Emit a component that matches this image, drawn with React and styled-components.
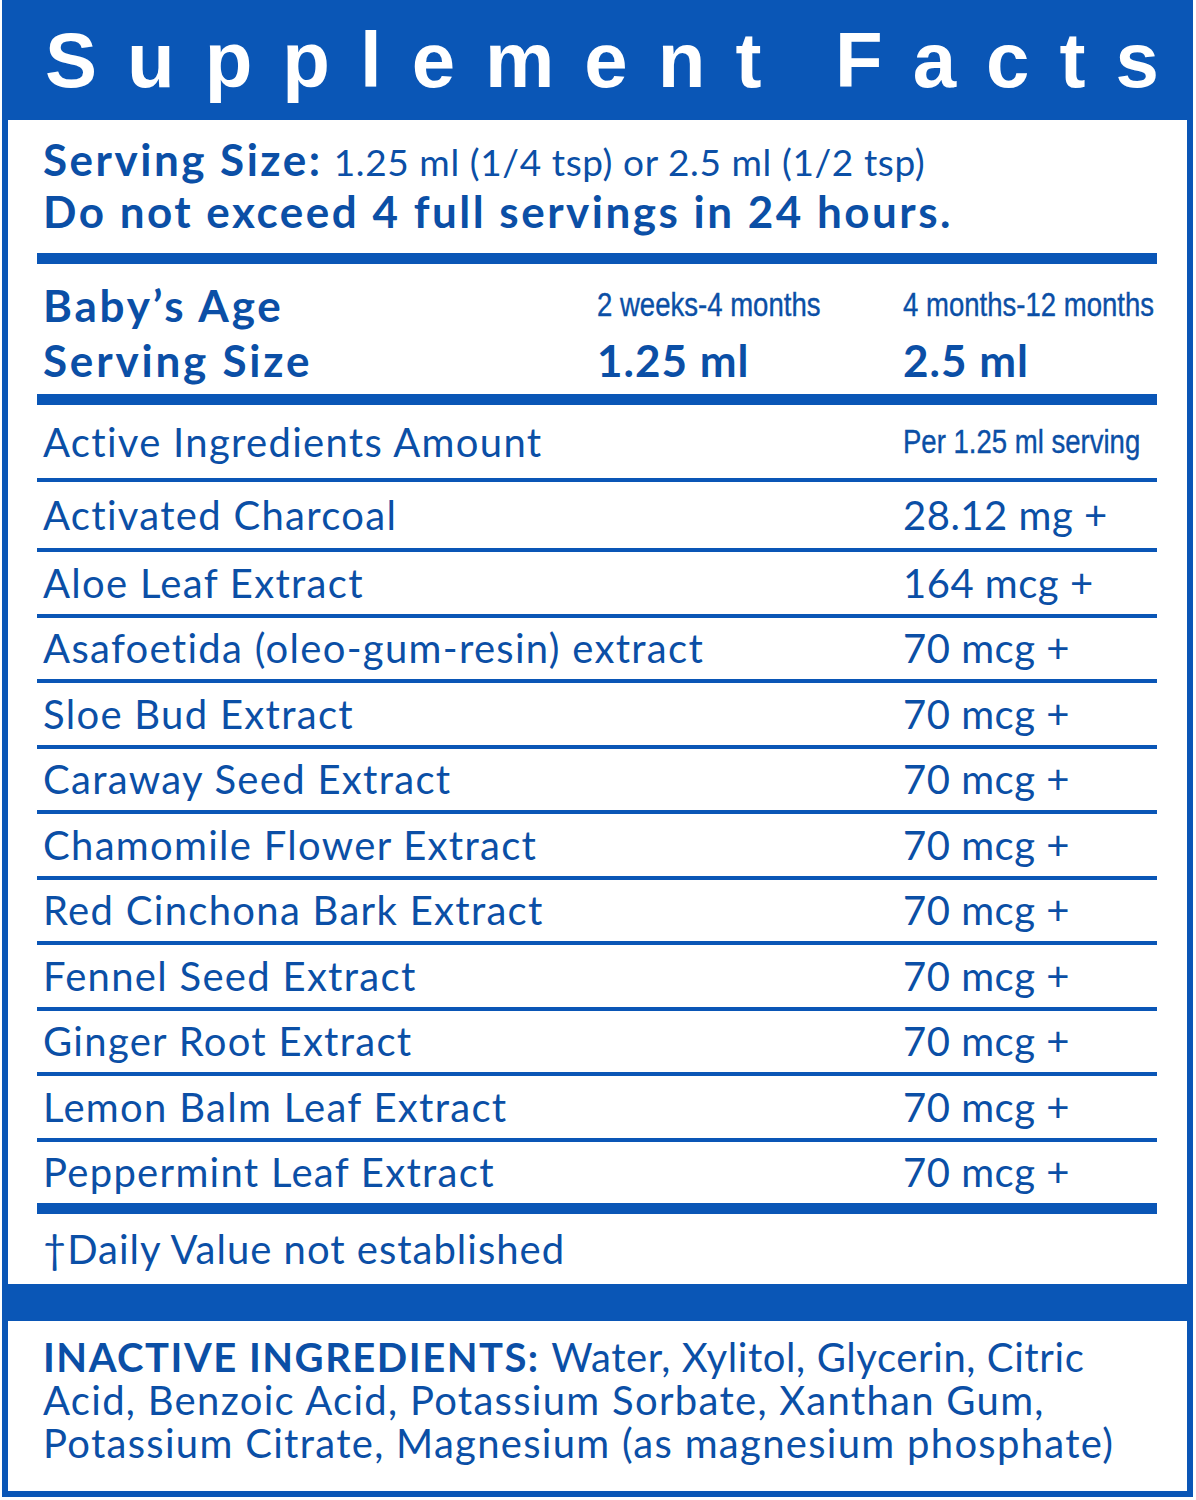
import React from "react";
import styled, { createGlobalStyle } from "styled-components";

const BLUE = "#0a56b6";
const INK = "#0b4fa6";

const GlobalStyle = createGlobalStyle`
  html, body {
    margin: 0;
    padding: 0;
    background: #ffffff;
  }
  body {
    font-family: Lato, "Noto Sans", sans-serif;
    color: ${INK};
  }
`;

const Frame = styled.div`
  width: 1196px;
  height: 1500px;
  box-sizing: border-box;
  padding: 0 3px 3px 2px;
  background: #ffffff;
  overflow: hidden;
`;

const Label = styled.div`
  height: 100%;
  box-sizing: border-box;
  border: 6px solid ${BLUE};
  border-top: none;
  display: flex;
  flex-direction: column;
`;

const Header = styled.div`
  height: 120px;
  flex: none;
  background: ${BLUE};
  display: flex;
  align-items: center;
  padding-left: 37px;
  box-sizing: border-box;
`;

const Title = styled.h1`
  margin: 0;
  color: #ffffff;
  font-family: "Liberation Sans", Arial, sans-serif;
  font-weight: 700;
  font-size: 78px;
  letter-spacing: 30px;
  word-spacing: -8px;
  line-height: 1;
  white-space: nowrap;
`;

const Body = styled.div`
  padding: 0 30px 0 29px;
`;

const ServingBlock = styled.div`
  padding: 13px 0 16px 6px;
`;

const ServingLine = styled.div`
  height: 52px;
  line-height: 52px;
  font-size: 44px;
  white-space: nowrap;
`;

const Strong = styled.span`
  font-weight: 700;
  font-size: 44px;
  letter-spacing: 2.5px;
`;

const Light = styled.span`
  font-weight: 400;
  font-size: 37px;
  letter-spacing: 0.6px;
`;

const Rule = styled.div`
  height: ${(p) => (p.thick ? 11 : 4)}px;
  background: ${BLUE};
`;

const AgeGrid = styled.div`
  display: grid;
  grid-template-columns: 554px 306px 1fr;
  grid-auto-rows: 55px;
  align-items: center;
  padding: 13px 0 7px 6px;
`;

const AgeHead = styled.div`
  font-size: 44px;
  font-weight: 700;
  letter-spacing: 2.8px;
  white-space: nowrap;
`;

const Narrow = styled.div`
  font-family: "Liberation Sans", Arial, sans-serif;
  font-size: 34px;
  white-space: nowrap;
  transform: scaleX(0.81);
  transform-origin: left center;
  -webkit-text-stroke: 0.4px ${INK};
`;

const AgeValue = styled.div`
  font-size: 44px;
  font-weight: 700;
  letter-spacing: 1px;
  white-space: nowrap;
`;

const Row = styled.div`
  display: grid;
  grid-template-columns: 860px 1fr;
  align-items: center;
  height: ${(p) => p.h || 61.5}px;
  padding-left: 6px;
  font-size: 40px;
  white-space: nowrap;
`;

const Name = styled.span`
  letter-spacing: 1.3px;
`;

const Amount = styled.span`
  letter-spacing: 0.5px;
`;

const Footnote = styled.div`
  height: 70px;
  display: flex;
  align-items: center;
  padding-left: 6px;
  font-size: 40px;
  letter-spacing: 1px;
`;

const Band = styled.div`
  height: 37px;
  flex: none;
  background: ${BLUE};
`;

const Inactive = styled.p`
  margin: 0;
  padding: 15px 0 0 35px;
  font-size: 40px;
  line-height: 43px;
  letter-spacing: 1.3px;
  white-space: nowrap;
`;

const Caps = styled.span`
  font-weight: 700;
  letter-spacing: 1.5px;
`;

const FirstLine = styled.span`
  letter-spacing: 0.6px;
`;

const ingredients = [
  ["Activated Charcoal", "28.12 mg +"],
  ["Aloe Leaf Extract", "164 mcg +"],
  ["Asafoetida (oleo-gum-resin) extract", "70 mcg +"],
  ["Sloe Bud Extract", "70 mcg +"],
  ["Caraway Seed Extract", "70 mcg +"],
  ["Chamomile Flower Extract", "70 mcg +"],
  ["Red Cinchona Bark Extract", "70 mcg +"],
  ["Fennel Seed Extract", "70 mcg +"],
  ["Ginger Root Extract", "70 mcg +"],
  ["Lemon Balm Leaf Extract", "70 mcg +"],
  ["Peppermint Leaf Extract", "70 mcg +"],
];

export default function App() {
  return (
    <Frame>
      <GlobalStyle />
      <Label>
        <Header>
          <Title>Supplement Facts</Title>
        </Header>
        <Body>
          <ServingBlock>
            <ServingLine>
              <Strong>Serving Size:</Strong> <Light>1.25 ml (1/4 tsp) or 2.5 ml (1/2 tsp)</Light>
            </ServingLine>
            <ServingLine>
              <Strong>Do not exceed 4 full servings in 24 hours.</Strong>
            </ServingLine>
          </ServingBlock>
          <Rule thick />
          <AgeGrid>
            <AgeHead>Baby’s Age</AgeHead>
            <Narrow>2 weeks-4 months</Narrow>
            <Narrow>4 months-12 months</Narrow>
            <AgeHead>Serving Size</AgeHead>
            <AgeValue>1.25 ml</AgeValue>
            <AgeValue>2.5 ml</AgeValue>
          </AgeGrid>
          <Rule thick />
          <Row h={73}>
            <Name>Active Ingredients Amount</Name>
            <Narrow>Per 1.25 ml serving</Narrow>
          </Row>
          {ingredients.map(([name, amount], i) => (
            <React.Fragment key={name}>
              <Rule />
              <Row h={i === 0 ? 66 : undefined}>
                <Name>{name}</Name>
                <Amount>{amount}</Amount>
              </Row>
            </React.Fragment>
          ))}
          <Rule thick />
          <Footnote>†Daily Value not established</Footnote>
        </Body>
        <Band />
        <Inactive>
          <Caps>INACTIVE INGREDIENTS:</Caps>{" "}
          <FirstLine>Water, Xylitol, Glycerin, Citric</FirstLine>
          <br />
          Acid, Benzoic Acid, Potassium Sorbate, Xanthan Gum,
          <br />
          Potassium Citrate, Magnesium (as magnesium phosphate)
        </Inactive>
      </Label>
    </Frame>
  );
}
